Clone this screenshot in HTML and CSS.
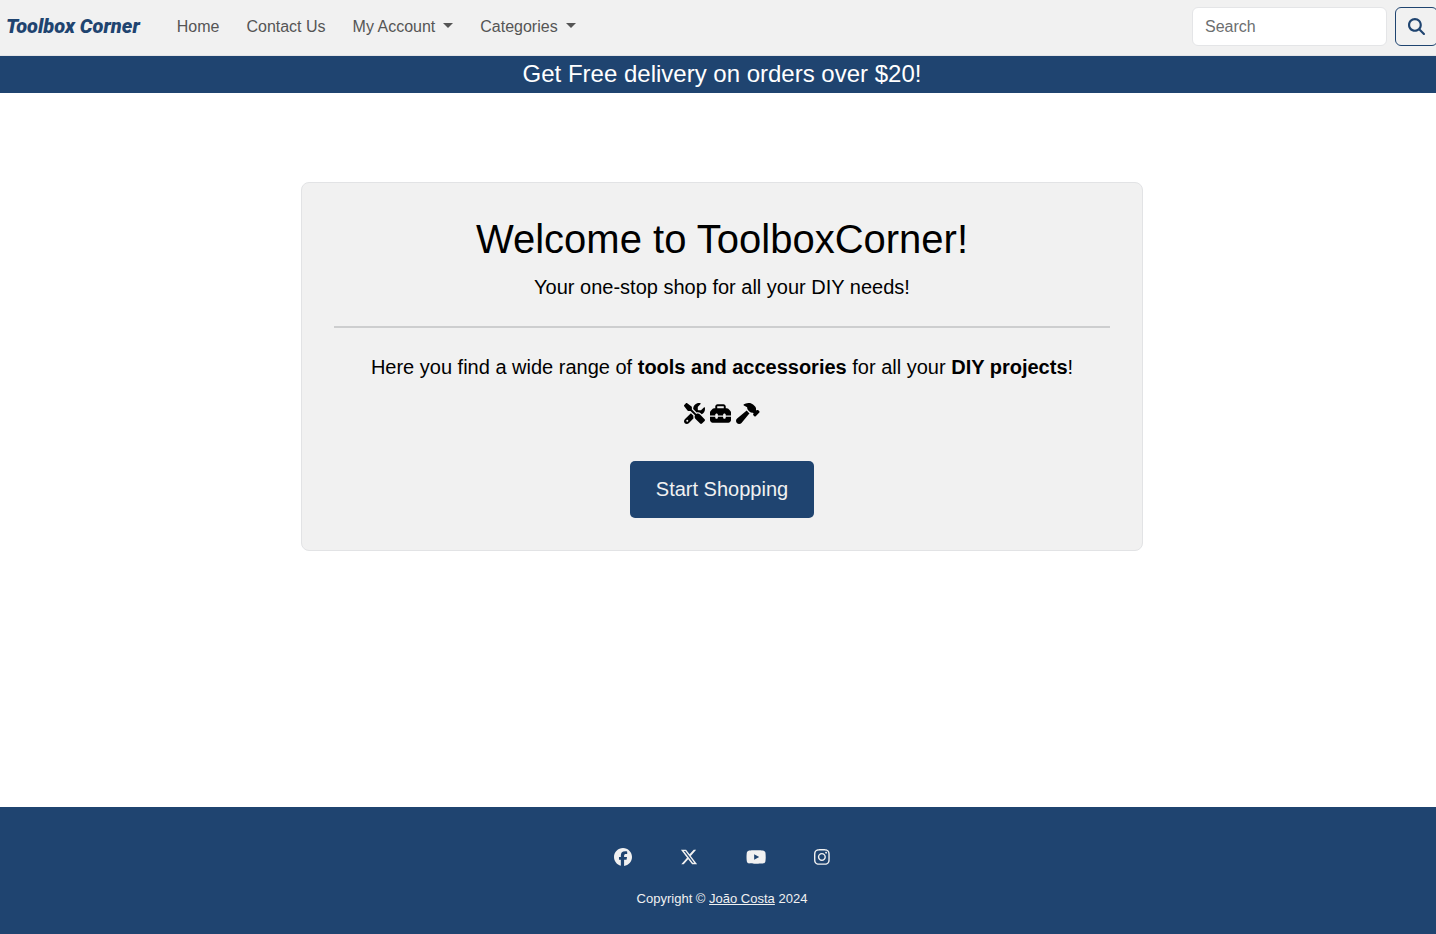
FILE: index.html
```html
<!DOCTYPE html>
<html lang="en">
<head>
<meta charset="utf-8">
<title>Toolbox Corner</title>
<link rel="stylesheet" href="styles.css">
</head>
<body>
<header class="navbar">
  <a class="brand" href="#">Toolbox Corner</a>
  <nav class="nav">
    <a class="nav-link" href="#">Home</a>
    <a class="nav-link" href="#">Contact Us</a>
    <button class="nav-link dropdown" type="button">My Account</button>
    <button class="nav-link dropdown" type="button">Categories</button>
  </nav>
  <form class="search">
    <input class="search-input" type="search" placeholder="Search" aria-label="Search">
    <button class="search-button" type="submit" aria-label="Submit search">
      <svg class="search-icon" viewBox="0 0 512 512"><path d="M416 208c0 45.9-14.9 88.3-40 122.7L502.6 457.4c12.5 12.5 12.5 32.8 0 45.3s-32.8 12.5-45.3 0L330.7 376c-34.4 25.2-76.8 40-122.7 40C93.1 416 0 322.9 0 208S93.1 0 208 0S416 93.1 416 208zM208 352a144 144 0 1 0 0-288 144 144 0 1 0 0 288z"/></svg>
    </button>
  </form>
</header>
<div class="banner">Get Free delivery on orders over $20!</div>
<main class="main">
  <section class="card">
    <h1 class="title">Welcome to ToolboxCorner!</h1>
    <p class="text">Your one-stop shop for all your DIY needs!</p>
    <hr class="rule">
    <p class="text">Here you find a wide range of <strong>tools and accessories</strong> for all your <strong>DIY projects</strong>!</p>
    <div class="tools">
      <svg class="tool" viewBox="0 0 512 512"><path d="M78.6 5C69.1-2.4 55.6-1.5 47 7L7 47c-8.5 8.5-9.4 22-2.1 31.6l80 104c4.5 5.9 11.6 9.4 19 9.4h54.1l109 109c-14.7 29-10 65.4 14.3 89.6l112 112c12.5 12.5 32.8 12.5 45.3 0l64-64c12.5-12.5 12.5-32.8 0-45.3l-112-112c-24.2-24.2-60.6-29-89.6-14.3l-109-109V104c0-7.5-3.5-14.5-9.4-19L78.6 5zM19.9 396.1C7.2 408.8 0 426.1 0 444.1C0 481.6 30.4 512 67.9 512c18 0 35.3-7.2 48-19.9L233.7 374.3c-7.8-20.9-9-43.6-3.6-65.1l-61.7-61.7L19.9 396.1zM512 144c0-10.5-1.1-20.7-3.2-30.5c-2.4-11.2-16.1-14.1-24.2-6l-63.9 63.9c-3 3-7.1 4.7-11.3 4.7H352c-8.8 0-16-7.2-16-16V102.6c0-4.2 1.7-8.3 4.7-11.3l63.9-63.9c8.1-8.1 5.2-21.8-6-24.2C388.7 1.1 378.5 0 368 0C288.5 0 224 64.5 224 144l0 .8 85.3 85.3c36-9.1 75.8 .5 104 28.7L429 274.5c49-23 83-72.8 83-130.5zM56 432a24 24 0 1 1 48 0 24 24 0 1 1 -48 0z"/></svg>
      <svg class="tool" viewBox="0 0 512 512"><path d="M176 88v40H336V88c0-4.4-3.6-8-8-8H184c-4.4 0-8 3.6-8 8zm-48 40V88c0-30.9 25.1-56 56-56H328c30.9 0 56 25.1 56 56v40h28.1c12.7 0 24.9 5.1 33.9 14.1l51.9 51.9c9 9 14.1 21.2 14.1 33.9V304H384V288c0-17.7-14.3-32-32-32s-32 14.3-32 32v16H192V288c0-17.7-14.3-32-32-32s-32 14.3-32 32v16H0V227.9c0-12.7 5.1-24.9 14.1-33.9l51.9-51.9c9-9 21.2-14.1 33.9-14.1H128zM0 416V336H128v16c0 17.7 14.3 32 32 32s32-14.3 32-32V336H320v16c0 17.7 14.3 32 32 32s32-14.3 32-32V336H512v80c0 35.3-28.7 64-64 64H64c-35.3 0-64-28.7-64-64z"/></svg>
      <svg class="tool" viewBox="0 0 576 512"><path d="M413.5 237.5c-28.2 4.8-58.2-3.6-80-25.4l-38.1-38.1C280.4 159 272 138.8 272 117.6V105.5L192.3 62c-5.3-2.9-8.6-8.6-8.3-14.7s3.9-11.5 9.5-14l47.2-21C259.1 4.2 279 0 299.2 0h18.1c36.7 0 72 14 98.7 39.1l44.6 42c24.2 22.8 33.2 55.7 26.6 86L503 183l8-8c9.4-9.4 24.6-9.4 33.9 0l24 24c9.4 9.4 9.4 24.6 0 33.9l-88 88c-9.4 9.4-24.6 9.4-33.9 0l-24-24c-9.4-9.4-9.4-24.6 0-33.9l8-8-17.5-17.5zM27.4 377.1L260.9 182.6c3.5 4.9 7.5 9.6 11.8 14l38.1 38.1c6 6 12.4 11.2 19.2 15.7L134.9 484.6c-14.5 17.4-36 27.4-58.6 27.4C34.1 512 0 477.8 0 435.7c0-22.6 10.1-44.1 27.4-58.6z"/></svg>
    </div>
    <a class="shop-button" href="#">Start Shopping</a>
  </section>
</main>
<footer class="footer">
  <div class="social">
    <a class="social-link" href="#" aria-label="Facebook"><svg class="social-icon" viewBox="0 0 512 512"><path d="M512 256C512 114.6 397.4 0 256 0S0 114.6 0 256C0 376 82.7 476.8 194.2 504.5V334.2H141.4V256h52.8V222.3c0-87.1 39.4-127.5 125-127.5c16.2 0 44.2 3.2 55.7 6.4V172c-6-.6-16.5-1-29.6-1c-42 0-58.2 15.9-58.2 57.2V256h83.6l-14.4 78.2H287V510.1C413.8 494.8 512 386.9 512 256h0z"/></svg></a>
    <a class="social-link" href="#" aria-label="X"><svg class="social-icon" viewBox="0 0 512 512"><path d="M389.2 48h70.6L305.6 224.2 487 464H345L233.7 318.6 106.5 464H35.8L200.7 275.5 26.8 48H172.4L272.9 180.9 389.2 48zM364.4 421.8h39.1L151.1 88h-42L364.4 421.8z"/></svg></a>
    <a class="social-link" href="#" aria-label="YouTube"><svg class="social-icon" viewBox="0 0 576 512"><path d="M549.655 124.083c-6.281-23.65-24.787-42.276-48.284-48.597C458.781 64 288 64 288 64S117.22 64 74.629 75.486c-23.497 6.322-42.003 24.947-48.284 48.597-11.412 42.867-11.412 132.305-11.412 132.305s0 89.438 11.412 132.305c6.281 23.65 24.787 41.5 48.284 47.821C117.22 448 288 448 288 448s170.78 0 213.371-11.486c23.497-6.321 42.003-24.171 48.284-47.821 11.412-42.867 11.412-132.305 11.412-132.305s0-89.438-11.412-132.305zm-317.51 213.508V175.185l142.739 81.205-142.739 81.201z"/></svg></a>
    <a class="social-link" href="#" aria-label="Instagram"><svg class="social-icon" viewBox="0 0 448 512"><path d="M224.1 141c-63.6 0-114.9 51.3-114.9 114.9s51.3 114.9 114.9 114.9S339 319.5 339 255.9 287.7 141 224.1 141zm0 189.6c-41.1 0-74.7-33.5-74.7-74.7s33.5-74.7 74.7-74.7 74.7 33.5 74.7 74.7-33.6 74.7-74.7 74.7zm146.4-194.3c0 14.9-12 26.8-26.8 26.8-14.9 0-26.8-12-26.8-26.8s12-26.8 26.8-26.8 26.8 12 26.8 26.8zm76.1 27.2c-1.7-35.9-9.9-67.7-36.2-93.9-26.2-26.2-58-34.4-93.9-36.2-37-2.1-147.9-2.1-184.9 0-35.8 1.7-67.6 9.9-93.9 36.1s-34.4 58-36.2 93.9c-2.1 37-2.1 147.9 0 184.9 1.7 35.9 9.9 67.7 36.2 93.9s58 34.4 93.9 36.2c37 2.1 147.9 2.1 184.9 0 35.9-1.7 67.7-9.9 93.9-36.2 26.2-26.2 34.4-58 36.2-93.9 2.1-37 2.1-147.8 0-184.8zM398.8 388c-7.8 19.6-22.9 34.7-42.6 42.6-29.5 11.7-99.5 9-132.1 9s-102.7 2.6-132.1-9c-19.6-7.8-34.7-22.9-42.6-42.6-11.7-29.5-9-99.5-9-132.1s-2.6-102.7 9-132.1c7.8-19.6 22.9-34.7 42.6-42.6 29.5-11.7 99.5-9 132.1-9s102.7-2.6 132.1 9c19.6 7.8 34.7 22.9 42.6 42.6 11.7 29.5 9 99.5 9 132.1s2.7 102.7-9 132.1z"/></svg></a>
  </div>
  <p class="copyright">Copyright © <a class="author" href="#">João Costa</a> 2024</p>
</footer>
</body>
</html>
```
FILE: styles.css
```css
* { box-sizing: border-box; }

body {
  margin: 0;
  min-height: 100vh;
  display: flex;
  flex-direction: column;
  overflow-x: hidden;
  background: #fff;
  color: #000;
  font-family: "Liberation Sans", Arial, sans-serif;
  font-size: 16px;
  line-height: 24px;
}

svg { display: block; fill: currentColor; }

.navbar {
  display: flex;
  align-items: center;
  padding: 7px 0 9px 6px;
  background: #f1f1f1;
  border-bottom: 1px solid #e4e5e7;
}

.brand {
  padding-bottom: 2px;
  color: #1f4470;
  font-family: Roboto, sans-serif;
  font-size: 20px;
  font-weight: 900;
  font-style: italic;
  text-decoration: none;
}

.nav { display: flex; gap: 27px; margin-left: 37px; }

.nav-link {
  display: flex;
  align-items: center;
  padding: 0;
  border: 0;
  background: none;
  color: #555;
  font: inherit;
  text-decoration: none;
}

.dropdown::after {
  content: "";
  margin-left: 8px;
  margin-bottom: 3px;
  border: 5px solid transparent;
  border-top-color: currentColor;
  border-bottom: 0;
}

.search { display: flex; gap: 8px; margin-left: auto; margin-right: -2px; }

.search-input {
  width: 195px;
  height: 39px;
  padding: 0 12px;
  border: 1px solid #e4e5e7;
  border-radius: 6px;
  background: #fff;
  color: #333;
  font: inherit;
}

.search-input::placeholder { color: #6c6e70; }

.search-button {
  padding: 0 12px;
  border: 1px solid #1f4470;
  border-radius: 6px;
  background: none;
  color: #1f4470;
}

.search-icon { width: 17px; height: 17px; }

.banner {
  padding: 0 0 1px 8px;
  background: #1f4470;
  color: #fff;
  font-size: 24px;
  line-height: 36px;
  text-align: center;
}

.main { flex: 1; padding: 89px 24px 24px 32px; }

.card {
  max-width: 842px;
  margin: 0 auto;
  padding: 32px;
  border: 1px solid #e2e3e5;
  border-radius: 8px;
  background: #f1f1f1;
  text-align: center;
}

.title { margin: 0 0 8px; font-size: 40px; font-weight: 400; line-height: 48px; }

.text { margin: 0; font-size: 20px; line-height: 32px; }

.rule { margin: 23px 0; border: 0; border-top: 2px solid #cdcecf; }

.tools { display: flex; justify-content: center; gap: 5px; margin: 20px 0 37px; }

.tool { height: 21px; }

.shop-button {
  display: inline-block;
  padding: 12px 26px;
  border-radius: 5px;
  background: #1f4470;
  color: #f1f1f1;
  font-size: 20px;
  line-height: 33px;
  text-decoration: none;
  vertical-align: top;
}

.footer {
  padding: 41px 0 23px 8px;
  background: #1f4470;
  color: #f1f1f1;
  text-align: center;
}

.social { display: flex; justify-content: center; gap: 48px; }

.social-link { color: inherit; }

.social-icon { height: 18px; }

.copyright { margin: 21px 0 0; font-size: 13px; line-height: 24px; }

.author { color: inherit; }
```
